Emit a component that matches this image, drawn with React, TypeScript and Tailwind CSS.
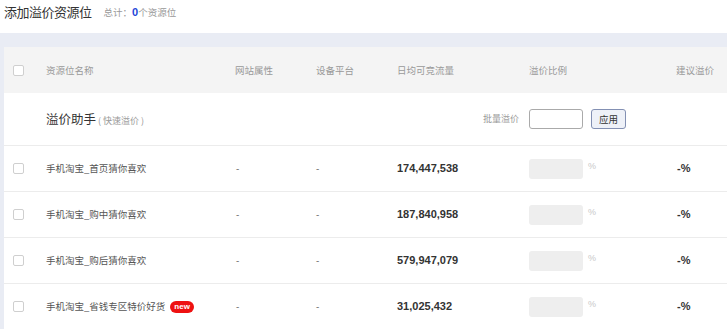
const rows = [
  { name: "手机淘宝_首页猜你喜欢", traffic: "174,447,538" },
  { name: "手机淘宝_购中猜你喜欢", traffic: "187,840,958" },
  { name: "手机淘宝_购后猜你喜欢", traffic: "579,947,079" },
  { name: "手机淘宝_省钱专区特价好货", traffic: "31,025,432", isNew: true },
]

const cjk = { fontFamily: '"Noto Sans CJK SC", "Liberation Sans", sans-serif' }
const cols = "grid grid-cols-[42px_189px_81px_81px_132px_147px_1fr] items-center"

function Checkbox() {
  return <div className="ml-[9px] h-[11px] w-[11px] rounded-[2px] border border-[#cfcfcf] bg-white" />
}

export default function App() {
  return (
    <div className="h-[329px] w-[727px] overflow-hidden bg-white" style={cjk}>
      {/* page title */}
      <div className="flex h-[33px] items-start gap-3 pl-[4px] pt-[2px]">
        <span className="text-[13px] leading-[20px] tracking-[-0.5px] text-[#333]">添加溢价资源位</span>
        <span className="text-[9.5px] leading-[20px] text-[#999]">
          总计：<b className="text-[11px] text-[#2346d8]" style={{ fontFamily: '"Liberation Sans", sans-serif' }}>0</b>个资源位
        </span>
      </div>

      <div className="bg-[#e9ecf4] pl-[4px] pt-[14px]">
        <div className="bg-white">
          {/* table header */}
          <div className={`${cols} h-[46px] bg-[#f4f4f4] text-[9.5px] text-[#999]`}>
            <Checkbox />
            <span>资源位名称</span>
            <span>网站属性</span>
            <span>设备平台</span>
            <span>日均可竞流量</span>
            <span>溢价比例</span>
            <span>建议溢价</span>
          </div>

          {/* helper row */}
          <div className={`${cols} h-[53px] border-b border-[#ececec]`}>
            <div className="col-span-5 flex items-center justify-between pl-[42px] pr-[10px]">
              <span className="text-[12.5px] text-[#333]">
                溢价助手<span className="ml-[2px] text-[9px] text-[#999]">( 快速溢价 )</span>
              </span>
              <span className="text-[9px] text-[#999]">批量溢价</span>
            </div>
            <div className="flex items-center gap-[8px]">
              <div className="h-[20px] w-[54px] rounded-[3px] border border-[#aaa] bg-white" />
              <button className="h-[20px] w-[35px] rounded-[3px] border border-[#8390b3] bg-[#eef1f8] text-[9.5px] text-[#333]">
                应用
              </button>
            </div>
          </div>

          {rows.map((r) => (
            <div key={r.name} className={`${cols} h-[46px] border-b border-[#ececec] text-[9.5px] text-[#555]`}>
              <Checkbox />
              <span className="flex items-center gap-[5px]">
                {r.name}
                {r.isNew && (
                  <span
                    className="rounded-full bg-[#ee1111] px-[4px] text-[8px] font-bold leading-[12px] text-white"
                    style={{ fontFamily: '"Liberation Sans", sans-serif' }}
                  >
                    new
                  </span>
                )}
              </span>
              <span className="pl-[1px]">-</span>
              <span>-</span>
              <span className="text-[11px] font-bold text-[#333]" style={{ fontFamily: '"Liberation Sans", sans-serif' }}>
                {r.traffic}
              </span>
              <div className="flex items-center gap-[5px]">
                <div className="h-[20px] w-[54px] rounded-[3px] bg-[#eeeeee]" />
                <span className="-mt-[3px] text-[9px] text-[#c8c8c8]" style={{ fontFamily: '"Liberation Sans", sans-serif' }}>%</span>
              </div>
              <span className="pl-[1px] text-[11px] font-bold text-[#333]" style={{ fontFamily: '"Liberation Sans", sans-serif' }}>
                -%
              </span>
            </div>
          ))}
        </div>
      </div>
    </div>
  )
}
